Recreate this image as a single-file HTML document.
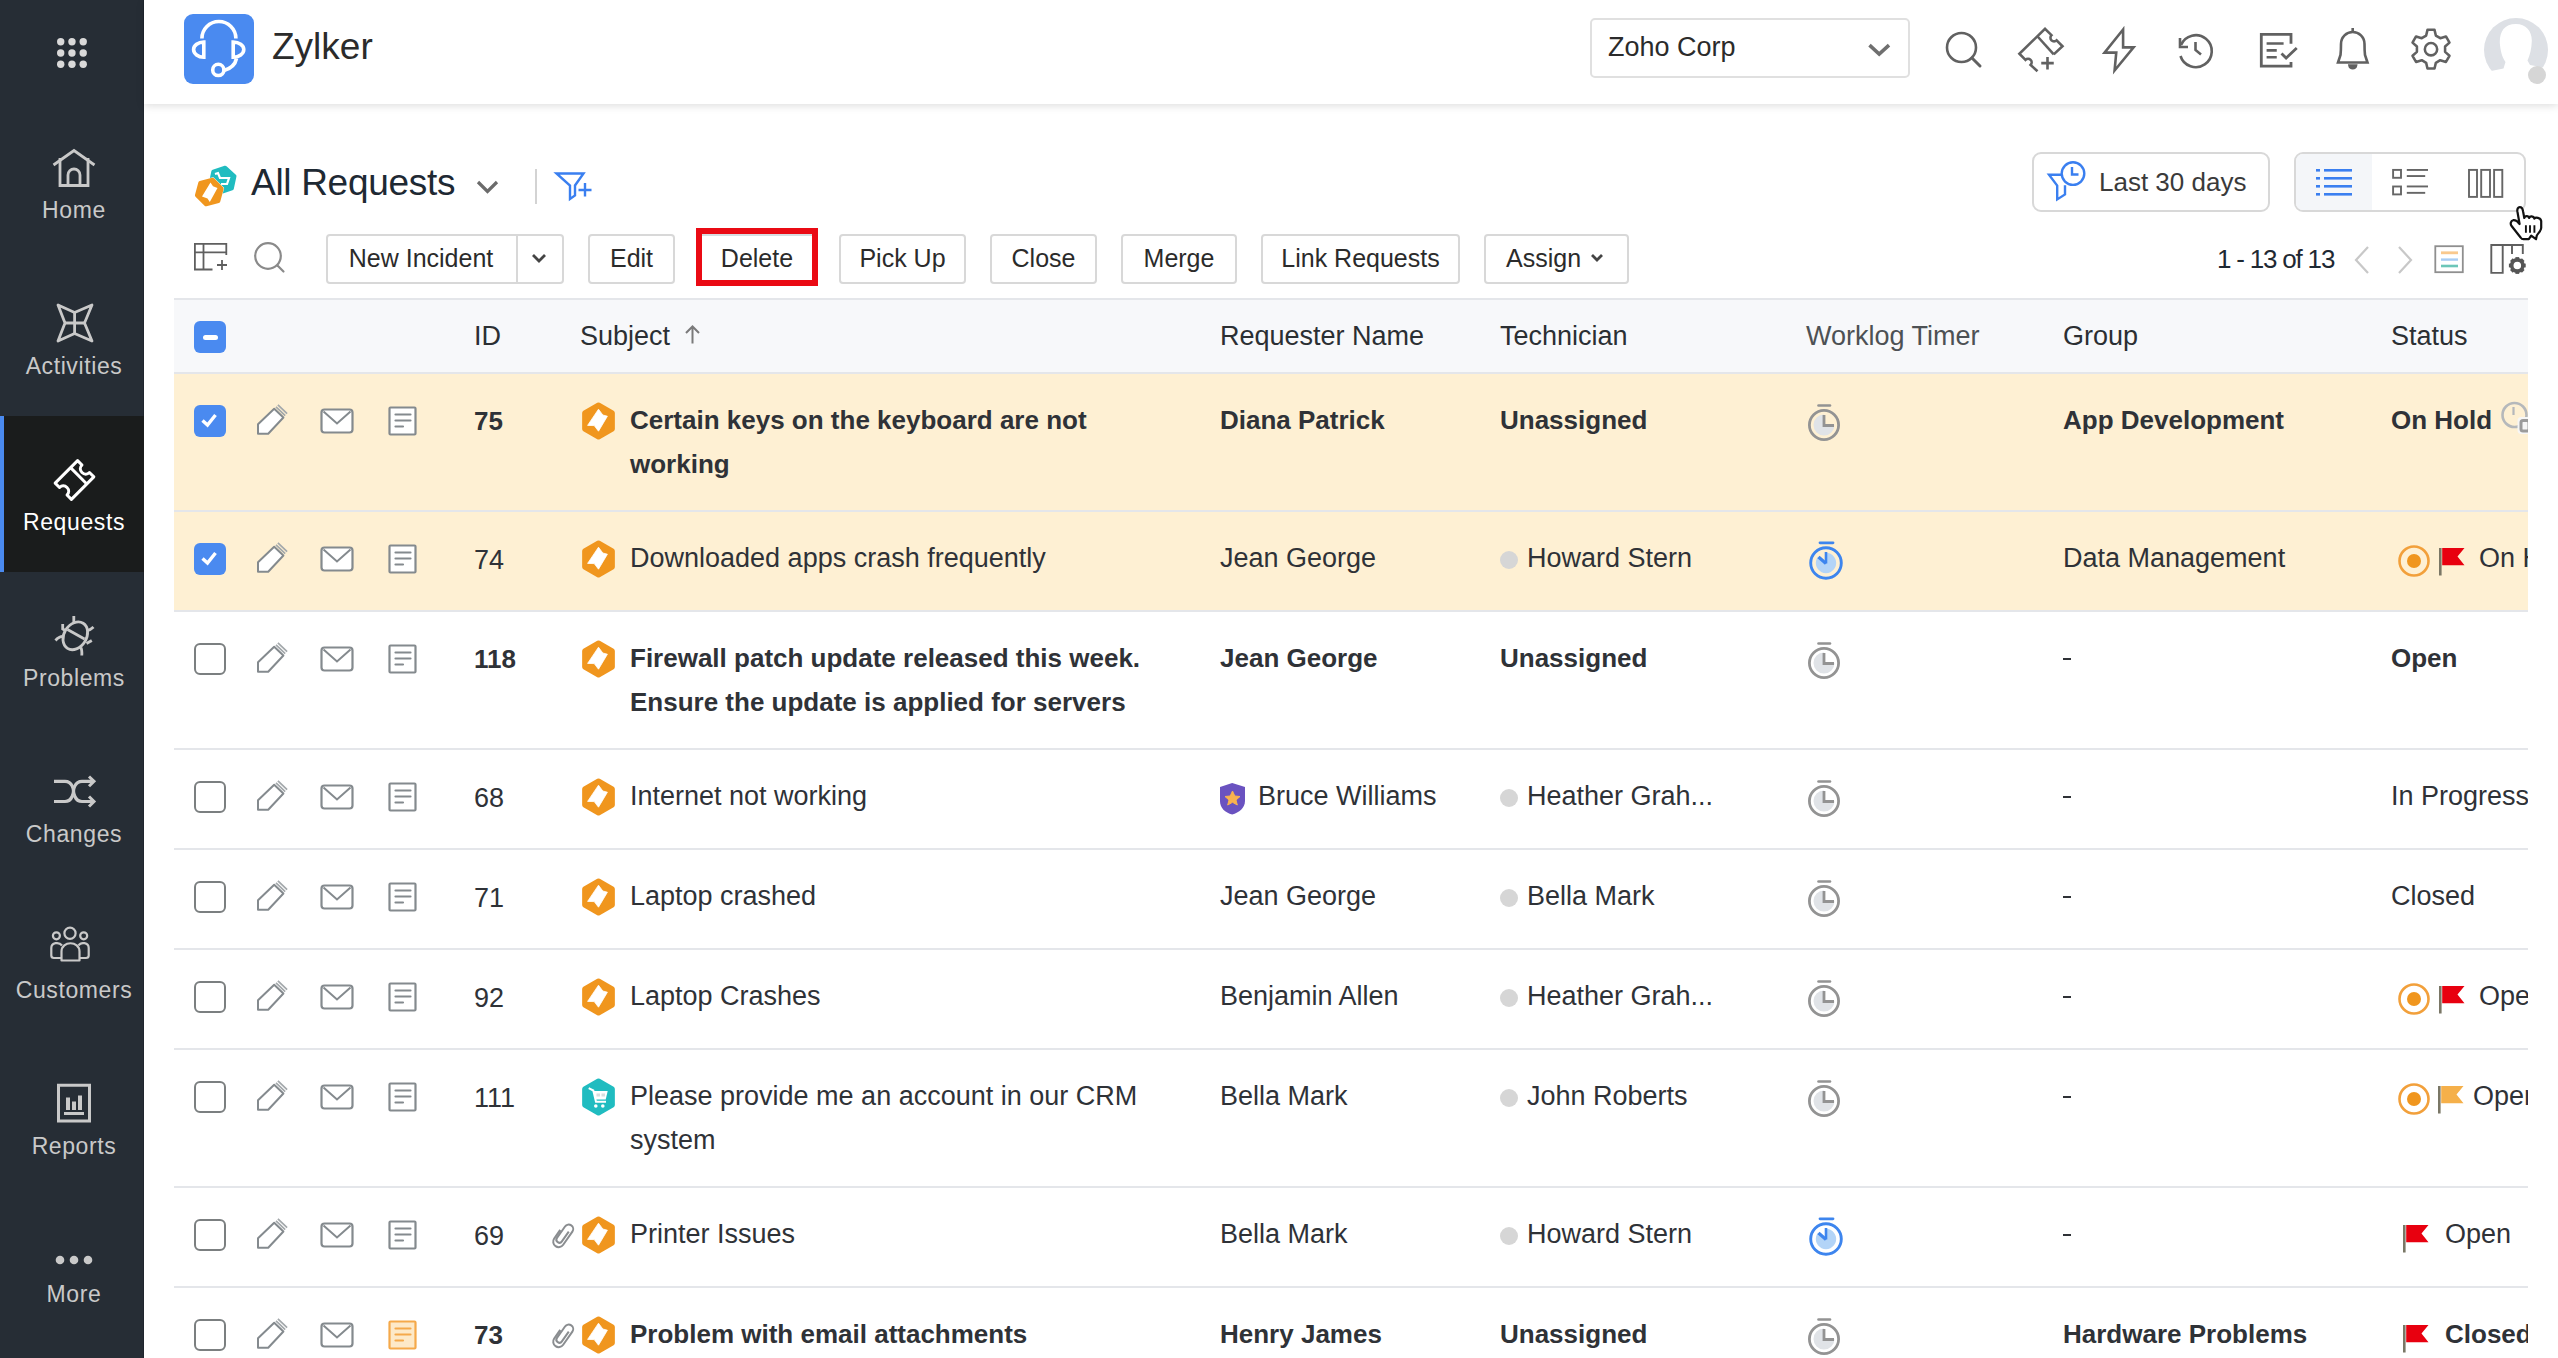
<!DOCTYPE html><html><head><meta charset="utf-8"><style>
html,body{margin:0;padding:0;width:2558px;height:1358px;overflow:hidden;background:#fff;}
body{position:relative;font-family:'Liberation Sans',sans-serif;}
.t{position:absolute;white-space:nowrap;line-height:1;font-family:'Liberation Sans',sans-serif;}
svg{overflow:visible}
</style></head><body>
<div style="position:absolute;left:0px;top:0px;width:144px;height:1358px;background:#262d35"></div>
<div style="position:absolute;left:143px;top:0px;width:1px;height:1358px;background:#1f252d"></div>
<svg style="position:absolute;left:0px;top:0px" width="144" height="104" viewBox="0 0 144 104"><circle cx="60.7" cy="41.7" r="3.7" fill="#d9d9d9"/><circle cx="60.7" cy="52.95" r="3.7" fill="#d9d9d9"/><circle cx="60.7" cy="64.2" r="3.7" fill="#d9d9d9"/><circle cx="71.95" cy="41.7" r="3.7" fill="#d9d9d9"/><circle cx="71.95" cy="52.95" r="3.7" fill="#d9d9d9"/><circle cx="71.95" cy="64.2" r="3.7" fill="#d9d9d9"/><circle cx="83.2" cy="41.7" r="3.7" fill="#d9d9d9"/><circle cx="83.2" cy="52.95" r="3.7" fill="#d9d9d9"/><circle cx="83.2" cy="64.2" r="3.7" fill="#d9d9d9"/></svg>
<div style="position:absolute;left:0px;top:416px;width:144px;height:156px;background:#1a1c1c"></div>
<div style="position:absolute;left:0px;top:416px;width:4px;height:156px;background:#4a8af0"></div>
<svg style="position:absolute;left:0px;top:0px" width="144" height="260" viewBox="0 0 144 260"><g fill="none" stroke="#c9c9c9" stroke-width="2.8" stroke-linejoin="miter"><path d="M53.5 165 L74 150.5 L94.5 165"/><path d="M60 158 V185.5 H88 V158"/><path d="M68 185.5 V175 A6 6 0 0 1 80 175 V185.5"/></g></svg>
<svg style="position:absolute;left:0px;top:260px" width="144" height="156" viewBox="0 0 144 156"><g fill="none" stroke="#c9c9c9" stroke-width="2.8" stroke-linejoin="round"><path d="M58 45 L74.6 52.5 L92 45 L84.5 63 L92 81 L74.6 73.5 L58 81 L65 63 Z" /><path d="M74.6 52.5 V73.5 M65 63 H84.5"/></g></svg>
<svg style="position:absolute;left:0px;top:416px" width="144" height="156" viewBox="0 0 144 156"><g fill="none" stroke="#ffffff" stroke-width="3.4" stroke-linejoin="round"><g transform="translate(74.5,64) scale(0.88) translate(-74.5,-66.5)"><path d="M78 44.5 L83 49.5 C80.5 52 80.5 55.5 83 58 C85.5 60.5 89 60.5 91.5 58 L96.5 63 L71 88.5 L66 83.5 C68.5 81 68.5 77.5 66 75 C63.5 72.5 60 72.5 57.5 75 L52.5 70 Z"/><path d="M70 52.5 L88.5 71"/></g></g></svg>
<svg style="position:absolute;left:0px;top:572px" width="144" height="156" viewBox="0 0 144 156"><g fill="none" stroke="#c9c9c9" stroke-width="2.8" stroke-linecap="butt"><ellipse cx="75.3" cy="63.8" rx="11.2" ry="14.8" transform="rotate(32 75.3 63.8)"/><path d="M67.5 57.5 L84.5 67"/><path d="M73.8 44 V51.5"/><path d="M62.7 52 V57 L66 59"/><path d="M55.5 68.5 C58 65.5 60.5 64 64 64.5"/><path d="M93.5 55 C91.5 57 89.5 58.5 86.5 58.8"/><path d="M91.8 68.5 L86.5 71.5"/><path d="M81.8 83.5 C82 80 82 77.5 80.8 75.5"/></g></svg>
<svg style="position:absolute;left:0px;top:728px" width="144" height="156" viewBox="0 0 144 156"><g fill="none" stroke="#c9c9c9" stroke-width="3.2"><path d="M54 53.3 H65 C73 53.3 73.5 63 73.5 63 C73.5 63 74 73.5 82 73.5 H93"/><path d="M54 73.5 H65 C73 73.5 73.5 63 73.5 63 C73.5 63 74 53.3 82 53.3 H93"/><path d="M89 48.5 L94 53.3 L89 58.3 M89 68.5 L94 73.5 L89 78.5" stroke-width="3"/></g></svg>
<svg style="position:absolute;left:0px;top:884px" width="144" height="156" viewBox="0 0 144 156"><g fill="none" stroke="#c9c9c9" stroke-width="2.2" stroke-linejoin="round"><circle cx="70" cy="49.3" r="5.6"/><circle cx="56.4" cy="51.8" r="3.5"/><circle cx="83.7" cy="51.8" r="3.5"/><path d="M61.5 76.5 V67.5 C61.5 56.5 79.5 56.5 79.5 67.5 V76.5 Z"/><path d="M61.5 74 H54 C52.5 74 51.3 73 51.3 71.5 V64 C51.3 58.5 59 57.5 62 61.5"/><path d="M79.5 74 H86 C87.5 74 88.7 73 88.7 71.5 V64 C88.7 58.5 81 57.5 78.5 61.5"/></g></svg>
<svg style="position:absolute;left:0px;top:1040px" width="144" height="156" viewBox="0 0 144 156"><g fill="#c9c9c9"><path fill="none" stroke="#c9c9c9" stroke-width="3" d="M58.5 45.3 H89.5 V81 H58.5 Z"/><rect x="66" y="57.5" width="4" height="12.5"/><rect x="72" y="61.5" width="4" height="8.5"/><rect x="78" y="55.5" width="4" height="14.5"/><rect x="64" y="72" width="20" height="3"/></g></svg>
<svg style="position:absolute;left:0px;top:1196px" width="144" height="162" viewBox="0 0 144 162"><circle cx="60" cy="64" r="4.3" fill="#c9c9c9"/><circle cx="74" cy="64" r="4.3" fill="#c9c9c9"/><circle cx="88" cy="64" r="4.3" fill="#c9c9c9"/></svg>
<div class="t" style="left:2px;width:144px;text-align:center;top:198.5px;font-size:23px;color:#c9c9c9;letter-spacing:0.6px">Home</div>
<div class="t" style="left:2px;width:144px;text-align:center;top:354.5px;font-size:23px;color:#c9c9c9;letter-spacing:0.6px">Activities</div>
<div class="t" style="left:2px;width:144px;text-align:center;top:510.5px;font-size:23px;color:#ffffff;letter-spacing:0.6px">Requests</div>
<div class="t" style="left:2px;width:144px;text-align:center;top:666.5px;font-size:23px;color:#c9c9c9;letter-spacing:0.6px">Problems</div>
<div class="t" style="left:2px;width:144px;text-align:center;top:822.5px;font-size:23px;color:#c9c9c9;letter-spacing:0.6px">Changes</div>
<div class="t" style="left:2px;width:144px;text-align:center;top:978.5px;font-size:23px;color:#c9c9c9;letter-spacing:0.6px">Customers</div>
<div class="t" style="left:2px;width:144px;text-align:center;top:1134.5px;font-size:23px;color:#c9c9c9;letter-spacing:0.6px">Reports</div>
<div class="t" style="left:2px;width:144px;text-align:center;top:1282.5px;font-size:23px;color:#c9c9c9;letter-spacing:0.6px">More</div>
<div style="position:absolute;left:144px;top:0px;width:2414px;height:104px;background:#fff;box-shadow:0 2px 8px rgba(0,0,0,0.13)"></div>
<div style="position:absolute;left:184px;top:14px;width:70px;height:70px;background:#4a8af0;border-radius:9px"></div>
<svg style="position:absolute;left:184px;top:14px" width="70" height="70" viewBox="0 0 70 70"><g fill="none" stroke="#fff" stroke-width="3.6"><path d="M17.9 24.5 A17 17 0 0 1 51.9 24.5"/><path d="M19.8 28 V43.2 A10.2 7.6 0 0 1 19.8 28 Z"/><path d="M49.2 28 V43.2 A10.6 7.6 0 0 0 49.2 28 Z"/><path d="M52.5 44.5 C51 51.5 47 54.5 40 56.5"/><circle cx="34.3" cy="55.9" r="5.6"/></g></svg>
<div class="t" style="left:272px;top:27.7px;font-size:37px;font-weight:400;color:#2b2b2b;">Zylker</div>
<div style="position:absolute;left:1590px;top:18px;width:320px;height:59.5px;border:2px solid #e0e0e0;border-radius:5px;box-sizing:border-box;background:#fff"></div>
<div class="t" style="left:1608px;top:34.1px;font-size:27px;font-weight:400;color:#2b2b2b;">Zoho Corp</div>
<svg style="position:absolute;left:1866px;top:38px" width="28" height="22" viewBox="0 0 28 22"><path d="M3.5 7.2 L13.2 16 L23 7.2" fill="none" stroke="#6f6f6f" stroke-width="3.6"/></svg>
<svg style="position:absolute;left:1940px;top:25px" width="50" height="50" viewBox="0 0 50 50"><g fill="none" stroke="#616161" stroke-width="2.6"><circle cx="21.5" cy="22.5" r="14.5"/><path d="M32 33 L40 41" stroke-width="3" stroke-linecap="round"/></g></svg>
<svg style="position:absolute;left:2015px;top:25px" width="50" height="50" viewBox="0 0 50 50"><g fill="none" stroke="#616161" stroke-width="2.6" stroke-linejoin="miter"><path d="M38.75 29.4 L47.5 21.25 L41.6 15.3 A3.6 3.6 0 0 1 36.5 10.2 L30 3.75 L4.4 28.75 L10.5 34.8 A3.6 3.6 0 0 1 15.6 39.9 L22.5 46.25"/><path d="M22.6 11.5 L38.75 29.4"/><path d="M32.5 32 V44.5 M26.25 38.1 H38.75"/></g></svg>
<svg style="position:absolute;left:2095px;top:25px" width="50" height="50" viewBox="0 0 50 50"><path d="M28.1 4.5 L9.5 27.6 H21.25 L19.6 45.5 L38.6 22.4 H28.1 Z" fill="none" stroke="#616161" stroke-width="2.6" stroke-linejoin="miter"/></svg>
<svg style="position:absolute;left:2172px;top:25.5px" width="50" height="50" viewBox="0 0 50 50"><g fill="none" stroke="#616161" stroke-width="2.6"><path d="M9 19 A16 16 0 1 1 8.5 30"/><path d="M8 12 V21 H16" /><path d="M23.5 16 V24 L29 28.5"/></g></svg>
<svg style="position:absolute;left:2250px;top:25px" width="50" height="50" viewBox="0 0 50 50"><g fill="none" stroke="#616161" stroke-width="2.8"><path d="M41 18.75 V9.4 H11.3 V41.1 H41 V36.9"/><path d="M16.6 18.5 H33.6 M16.6 25.4 H26.75 M16.6 32.25 H26.75" stroke-width="2.6"/><path d="M31.5 28.5 L36.1 33.1 L46.75 23.1"/></g></svg>
<svg style="position:absolute;left:2330px;top:25px" width="50" height="50" viewBox="0 0 50 50"><g fill="none" stroke="#616161" stroke-width="2.6"><path d="M8 37.5 H37.5 L35 30 C34.5 26 34.5 22 34.5 19 C34.5 12 29 7 22.7 7 C16.5 7 11 12 11 19 C11 22 11 26 10.5 30 Z"/><path d="M22.7 3 V7"/><path d="M19.5 40.5 A3.3 3.3 0 0 0 26 40.5 Z" fill="#616161"/></g></svg>
<svg style="position:absolute;left:2405px;top:24px" width="52" height="52" viewBox="0 0 52 52"><g transform="translate(26,25.2) scale(0.88) translate(-26,-27)" fill="none" stroke="#616161" stroke-width="2.9" stroke-linejoin="round"><path d="M22 5 H30 L31.5 11.5 L36.5 14.5 L43 12.5 L47 19.5 L42 24 V30 L47 34.5 L43 41.5 L36.5 39.5 L31.5 42.5 L30 49 H22 L20.5 42.5 L15.5 39.5 L9 41.5 L5 34.5 L10 30 V24 L5 19.5 L9 12.5 L15.5 14.5 L20.5 11.5 Z"/><circle cx="26" cy="27" r="7"/></g></svg>
<svg style="position:absolute;left:2480px;top:10px" width="78" height="80" viewBox="0 0 78 80"><circle cx="36" cy="40" r="32" fill="#dde0e5"/><path d="M6 62 L23.5 58.5 L25.5 52 C22 47 20.5 41 19.8 33 C19.5 22 24 13.9 36 13.9 C46 13.9 52 21 51.8 31 C51.5 39 50 45 47.5 50.5 L50 55 L66 58 L66 80 L6 80 Z" fill="#fff"/><circle cx="57" cy="65" r="9" fill="#d6d6d6"/></svg>
<svg style="position:absolute;left:190px;top:160px" width="50" height="50" viewBox="0 0 50 50"><path d="M35.20 7.77 L44.49 16.14 L41.89 28.36 L30.00 32.23 L20.71 23.86 L23.31 11.64 Z" fill="#20bcc0" stroke="#20bcc0" stroke-width="4" stroke-linejoin="round"/><path d="M25 14 L28 13 L30 18 H39 L37 24 H31" fill="none" stroke="#fff" stroke-width="2.2"/><path d="M23.00 18.19 L33.11 28.30 L29.41 42.11 L15.60 45.81 L5.49 35.70 L9.19 21.89 Z" fill="#fff" stroke="#fff" stroke-width="2" stroke-linejoin="round"/><path d="M22.61 19.64 L31.66 28.69 L28.35 41.05 L15.99 44.36 L6.94 35.31 L10.25 22.95 Z" fill="#f0961e" stroke="#f0961e" stroke-width="4" stroke-linejoin="round"/><path d="M20.5 22.5 L23 26.2 L27.5 28 L19.8 42 L17.5 38.5 L12 36.5 Z" fill="#fff"/></svg>
<div class="t" style="left:251px;top:164.3px;font-size:37px;font-weight:400;color:#1e2933;letter-spacing:-0.3px">All Requests</div>
<svg style="position:absolute;left:470px;top:176px" width="36" height="24" viewBox="0 0 36 24"><path d="M8 6 L17.5 15.5 L27 6" fill="none" stroke="#6b6b6b" stroke-width="3.2"/></svg>
<div style="position:absolute;left:535px;top:169px;width:2px;height:35px;background:#d3d3d3"></div>
<svg style="position:absolute;left:550px;top:168px" width="48" height="40" viewBox="0 0 48 40"><g fill="none" stroke="#3a7ff0" stroke-width="2.4"><path d="M6.5 5.5 H33.5 L25 17.5 V27.5 L20 31 V17.5 Z"/><path d="M35 15 V28.5 M28.5 22 H41.5"/></g></svg>
<div style="position:absolute;left:2032px;top:152px;width:238px;height:60px;border:2px solid #d8d8d8;border-radius:9px;box-sizing:border-box"></div>
<svg style="position:absolute;left:2044px;top:156px" width="48" height="48" viewBox="0 0 48 48"><g fill="none" stroke="#3a7ff0" stroke-width="2.4" stroke-linejoin="miter"><circle cx="29" cy="17.6" r="11.3"/><path d="M28 11 V18.5 H34.5"/><path d="M17.8 18.7 H5 L13.2 29.6 V43.4 L21 38.4 V29.2"/></g></svg>
<div class="t" style="left:2099px;top:169.0px;font-size:26px;font-weight:400;color:#3a3a3a;">Last 30 days</div>
<div style="position:absolute;left:2294px;top:152px;width:232px;height:60px;border:2px solid #d8d8d8;border-radius:9px;box-sizing:border-box;overflow:hidden"></div>
<div style="position:absolute;left:2296px;top:154px;width:76px;height:56px;background:#f4f6f9;border-radius:7px 0 0 7px"></div>
<svg style="position:absolute;left:2300px;top:160px" width="60" height="45" viewBox="0 0 60 45"><g fill="#3a7ff0"><rect x="16" y="9" width="4" height="2.6"/><rect x="16" y="17" width="4" height="2.6"/><rect x="16" y="25" width="4" height="2.6"/><rect x="16" y="33" width="4" height="2.6"/><rect x="24" y="9" width="28" height="2.6"/><rect x="24" y="17" width="28" height="2.6"/><rect x="24" y="25" width="28" height="2.6"/><rect x="24" y="33" width="28" height="2.6"/></g></svg>
<svg style="position:absolute;left:2380px;top:160px" width="60" height="45" viewBox="0 0 60 45"><g fill="none" stroke="#666" stroke-width="1.9"><rect x="13.1" y="9.9" width="7.9" height="7.9"/><rect x="13.1" y="26.5" width="7.9" height="7.9"/></g><g fill="#666"><rect x="26.8" y="9" width="21.2" height="1.9"/><rect x="26.8" y="15.1" width="18.4" height="1.9"/><rect x="26.8" y="25.5" width="21.2" height="1.9"/><rect x="26.8" y="31.9" width="18.4" height="1.9"/></g></svg>
<svg style="position:absolute;left:2460px;top:160px" width="60" height="45" viewBox="0 0 60 45"><g fill="none" stroke="#666" stroke-width="1.9"><rect x="9" y="9.9" width="8" height="27"/><rect x="21.2" y="9.9" width="8.8" height="27"/><rect x="34.1" y="9.9" width="8.2" height="27"/></g></svg>
<svg style="position:absolute;left:2500px;top:195px" width="50" height="50" viewBox="0 0 50 50"><path d="M19.6 29 L17.4 16.5 C17 13.8 18 12.2 19.8 12.2 C21.7 12.2 22.7 13.8 23.1 16.5 L24.3 23 C24.8 20.5 28.5 20.3 29.2 23 C29.7 20.8 33.6 20.8 34.3 23.6 C35.3 22 40.6 22.5 41.2 26 L41.2 33 C41 36 38.3 38 36.8 40.5 L36 44.2 L31.2 40.7 L28.8 44.2 H23.5 C22.2 44.2 21.3 43.6 20.6 42.5 L11.6 31 C10 29 10.7 25.8 13.2 25.2 C15.4 24.8 17.5 26.3 19.6 29 Z" fill="#fff" stroke="#111" stroke-width="2.2" stroke-linejoin="round"/><path d="M25.9 30.3 V37.8 M30 30.3 V37.8 M34.4 30.3 V37.8" stroke="#111" stroke-width="1.9"/></svg>
<svg style="position:absolute;left:190px;top:238px" width="42" height="38" viewBox="0 0 42 38"><g fill="none" stroke="#5f5f5f" stroke-width="1.8"><path d="M22.5 31.5 H4.9 V5.9 H36.3 V17"/><path d="M4.9 14.3 H36.3 M13.5 5.9 V31.5"/><path d="M32 22 V32 M27 27 H37"/></g></svg>
<svg style="position:absolute;left:250px;top:238px" width="42" height="42" viewBox="0 0 42 42"><g fill="none" stroke="#8a8a8a" stroke-width="2.2"><circle cx="18" cy="18" r="12.8"/><path d="M27.5 27.5 L33.5 33.5" stroke-linecap="round"/></g></svg>
<div style="position:absolute;left:326px;top:234px;width:238px;height:50px;border:2px solid #d8d8d8;border-radius:4px;box-sizing:border-box;background:#fff"></div>
<div style="position:absolute;left:516px;top:234px;width:2px;height:50px;background:#d8d8d8"></div>
<div class="t" style="left:326px;width:190px;text-align:center;top:245.8px;font-size:25px;color:#2b2b2b">New Incident</div>
<svg style="position:absolute;left:528px;top:248px" width="24" height="20" viewBox="0 0 24 20"><path d="M5 7 L11 13 L17 7" fill="none" stroke="#444" stroke-width="2.8"/></svg>
<div style="position:absolute;left:588px;top:234px;width:87px;height:50px;border:2px solid #d8d8d8;border-radius:4px;box-sizing:border-box;background:#fff"></div>
<div class="t" style="left:588px;width:87px;text-align:center;top:245.8px;font-size:25px;color:#2b2b2b">Edit</div>
<div style="position:absolute;left:702px;top:234px;width:110px;height:46px;background:#fff;border-top:2px solid #d6dde0;box-sizing:border-box"></div>
<div class="t" style="left:702px;width:110px;text-align:center;top:245.8px;font-size:25px;color:#2b2b2b">Delete</div>
<div style="position:absolute;left:696px;top:228px;width:122px;height:58px;border:6px solid #ea0a14;box-sizing:border-box"></div>
<div style="position:absolute;left:839px;top:234px;width:127px;height:50px;border:2px solid #d8d8d8;border-radius:4px;box-sizing:border-box;background:#fff"></div>
<div class="t" style="left:839px;width:127px;text-align:center;top:245.8px;font-size:25px;color:#2b2b2b">Pick Up</div>
<div style="position:absolute;left:990px;top:234px;width:107px;height:50px;border:2px solid #d8d8d8;border-radius:4px;box-sizing:border-box;background:#fff"></div>
<div class="t" style="left:990px;width:107px;text-align:center;top:245.8px;font-size:25px;color:#2b2b2b">Close</div>
<div style="position:absolute;left:1121px;top:234px;width:116px;height:50px;border:2px solid #d8d8d8;border-radius:4px;box-sizing:border-box;background:#fff"></div>
<div class="t" style="left:1121px;width:116px;text-align:center;top:245.8px;font-size:25px;color:#2b2b2b">Merge</div>
<div style="position:absolute;left:1261px;top:234px;width:199px;height:50px;border:2px solid #d8d8d8;border-radius:4px;box-sizing:border-box;background:#fff"></div>
<div class="t" style="left:1261px;width:199px;text-align:center;top:245.8px;font-size:25px;color:#2b2b2b">Link Requests</div>
<div style="position:absolute;left:1484px;top:234px;width:145px;height:50px;border:2px solid #d8d8d8;border-radius:4px;box-sizing:border-box;background:#fff"></div>
<div class="t" style="left:1506px;top:245.8px;font-size:25px;font-weight:400;color:#2b2b2b;">Assign</div>
<svg style="position:absolute;left:1586px;top:248px" width="24" height="20" viewBox="0 0 24 20"><path d="M6 7 L11 12 L16 7" fill="none" stroke="#444" stroke-width="2.8"/></svg>
<div class="t" style="left:2217px;top:246.0px;font-size:26px;font-weight:400;color:#1f2933;letter-spacing:-1.2px">1 - 13 of 13</div>
<svg style="position:absolute;left:2350px;top:244px" width="26" height="32" viewBox="0 0 26 32"><path d="M18 3 L6 16 L18 29" fill="none" stroke="#c8c8c8" stroke-width="2.2"/></svg>
<svg style="position:absolute;left:2393px;top:244px" width="26" height="32" viewBox="0 0 26 32"><path d="M6 3 L18 16 L6 29" fill="none" stroke="#c8c8c8" stroke-width="2.2"/></svg>
<svg style="position:absolute;left:2430px;top:242px" width="38" height="36" viewBox="0 0 38 36"><rect x="5.3" y="4.2" width="27.5" height="26" fill="#fff" stroke="#8f8f8f" stroke-width="1.8"/><rect x="11" y="9.4" width="17" height="2.8" fill="#f9c98e"/><rect x="11" y="16.4" width="17" height="2.4" fill="#a8cdf5"/><rect x="11" y="22.7" width="17" height="2.6" fill="#6cc6b8"/></svg>
<svg style="position:absolute;left:2486px;top:240px" width="46" height="40" viewBox="0 0 46 40"><g fill="none" stroke="#5f5f5f" stroke-width="1.9"><path d="M5.3 32.9 V5 H16.7 V32.9 Z"/><path d="M16.7 5 H36.8 V14 M26 5 V14"/></g><g transform="translate(31.3,25.5)"><rect x="-1.9" y="-8.4" width="3.8" height="4" transform="rotate(0)" fill="#555"/><rect x="-1.9" y="-8.4" width="3.8" height="4" transform="rotate(45)" fill="#555"/><rect x="-1.9" y="-8.4" width="3.8" height="4" transform="rotate(90)" fill="#555"/><rect x="-1.9" y="-8.4" width="3.8" height="4" transform="rotate(135)" fill="#555"/><rect x="-1.9" y="-8.4" width="3.8" height="4" transform="rotate(180)" fill="#555"/><rect x="-1.9" y="-8.4" width="3.8" height="4" transform="rotate(225)" fill="#555"/><rect x="-1.9" y="-8.4" width="3.8" height="4" transform="rotate(270)" fill="#555"/><rect x="-1.9" y="-8.4" width="3.8" height="4" transform="rotate(315)" fill="#555"/><circle r="5.6" fill="none" stroke="#555" stroke-width="3.6"/></g></svg>
<div style="position:absolute;left:174px;top:298px;width:2354px;height:1060px;overflow:hidden">
<div style="position:absolute;left:0px;top:0px;width:2354px;height:2px;background:#e4e6ea"></div>
<div style="position:absolute;left:0px;top:2px;width:2354px;height:72px;background:#f7f8fa"></div>
<div style="position:absolute;left:0px;top:74px;width:2354px;height:2px;background:#e4e6ea"></div>
<div style="position:absolute;left:20px;top:23px;width:32px;height:32px;background:#4a8af0;border-radius:6px"></div>
<div style="position:absolute;left:29px;top:37px;width:15px;height:5px;background:#fff;border-radius:2.5px"></div>
<div class="t" style="left:300px;top:25.1px;font-size:27px;font-weight:400;color:#2b2f33;">ID</div>
<div class="t" style="left:406px;top:25.1px;font-size:27px;font-weight:400;color:#2b2f33;">Subject</div>
<div class="t" style="left:1046px;top:25.1px;font-size:27px;font-weight:400;color:#2b2f33;">Requester Name</div>
<div class="t" style="left:1326px;top:25.1px;font-size:27px;font-weight:400;color:#2b2f33;">Technician</div>
<div class="t" style="left:1632px;top:25.1px;font-size:27px;font-weight:400;color:#4d5154;">Worklog Timer</div>
<div class="t" style="left:1889px;top:25.1px;font-size:27px;font-weight:400;color:#2b2f33;">Group</div>
<div class="t" style="left:2217px;top:25.1px;font-size:27px;font-weight:400;color:#2b2f33;">Status</div>
<svg style="position:absolute;left:506px;top:24px" width="26" height="26" viewBox="0 0 26 26"><path d="M12.5 4.5 V21.5 M6 11 L12.5 4.5 L19 11" fill="none" stroke="#7a7a7a" stroke-width="2"/></svg>
<div style="position:absolute;left:0px;top:76px;width:2354px;height:136px;background:#fef0d3"></div>
<div style="position:absolute;left:0px;top:212px;width:2354px;height:2px;background:#e4e6ea"></div>
<div style="position:absolute;left:20px;top:107px;width:32px;height:32px;background:#4a8af0;border-radius:6px"></div>
<svg style="position:absolute;left:20px;top:107px" width="32" height="32" viewBox="0 0 32 32"><path d="M8.5 15.5 L13.5 20 L21.5 10" fill="none" stroke="#fff" stroke-width="3.4"/></svg>
<svg style="position:absolute;left:81px;top:107px" width="34" height="34" viewBox="0 0 34 34"><path d="M3 19.2 L19.2 3.7 L28.4 12.5 L13.2 28.7 H3 Z" fill="#fff" stroke="#848a8e" stroke-width="2" stroke-linejoin="round"/><path d="M21 1.8 L30.2 10.6 M22.9 -0.1 L32.1 8.7" stroke="#a3a8ab" stroke-width="1.7"/></svg>
<svg style="position:absolute;left:146px;top:110px" width="36" height="30" viewBox="0 0 36 30"><rect x="1.5" y="1.5" width="31" height="23" rx="3" fill="#fff" stroke="#848a8e" stroke-width="2.2"/><path d="M3.5 3.5 L17 15.5 L30.5 3.5" fill="none" stroke="#848a8e" stroke-width="2"/></svg>
<svg style="position:absolute;left:214px;top:108px" width="32" height="32" viewBox="0 0 32 32"><rect x="1.5" y="1.5" width="26" height="27" rx="1" fill="#fff" stroke="#848a8e" stroke-width="2.2"/><path d="M7.5 8.5 H22.5 M7.5 14.5 H22.5 M7.5 20.5 H15" stroke="#848a8e" stroke-width="2.2" stroke-linecap="round"/></svg>
<div class="t" style="left:300px;top:110.0px;font-size:26px;font-weight:700;color:#2f3237;">75</div>
<svg style="position:absolute;left:408.4px;top:104.80000000000001px" width="33" height="36" viewBox="0 0 33 36"><path d="M16.50 2.00 L30.36 10.00 L30.36 26.00 L16.50 34.00 L2.64 26.00 L2.64 10.00 Z" fill="#f0961e" stroke="#f0961e" stroke-width="5" stroke-linejoin="round"/><path d="M16.5 6.2 L20.8 12 L25.4 13.2 L16.5 28.2 L12.2 22.6 L5.6 22.4 Z" fill="#fff" stroke="#fff" stroke-width="0.8" stroke-linejoin="round"/></svg>
<div class="t" style="left:456px;top:108.5px;font-size:26px;font-weight:700;color:#2f3237;">Certain keys on the keyboard are not</div>
<div class="t" style="left:456px;top:152.5px;font-size:26px;font-weight:700;color:#2f3237;">working</div>
<div class="t" style="left:1046px;top:108.5px;font-size:26px;font-weight:700;color:#2f3237;">Diana Patrick</div>
<div class="t" style="left:1326px;top:108.5px;font-size:26px;font-weight:700;color:#2f3237;">Unassigned</div>
<svg style="position:absolute;left:1630px;top:104.5px" width="40" height="40" viewBox="0 0 40 40"><path d="M20 22 V11.5 A10.5 10.5 0 1 0 30.5 22 Z" fill="#e0e3e7"/><circle cx="20" cy="22" r="14.6" fill="none" stroke="#939393" stroke-width="2.8"/><path d="M20 12 V22.5 H30" fill="none" stroke="#939393" stroke-width="2.8"/><path d="M14.5 2.5 H26" stroke="#939393" stroke-width="2.6" stroke-linecap="round"/></svg>
<div class="t" style="left:1889px;top:108.5px;font-size:26px;font-weight:700;color:#2f3237;">App Development</div>
<div class="t" style="left:2217px;top:108.5px;font-size:26px;font-weight:700;color:#2f3237;">On Hold</div>
<svg style="position:absolute;left:2326px;top:102px" width="40" height="40" viewBox="0 0 40 40"><circle cx="14.5" cy="15" r="12" fill="none" stroke="#b5b8bb" stroke-width="2.6"/><path d="M13.5 7 V15" stroke="#b5b8bb" stroke-width="2.2"/><rect x="17.5" y="17" width="15" height="17" rx="4" fill="#f6f6f6"/><rect x="21" y="20.5" width="8" height="10.5" rx="2" fill="none" stroke="#9b9b9b" stroke-width="3"/></svg>
<div style="position:absolute;left:0px;top:214px;width:2354px;height:98px;background:#fef0d3"></div>
<div style="position:absolute;left:0px;top:312px;width:2354px;height:2px;background:#e4e6ea"></div>
<div style="position:absolute;left:20px;top:245px;width:32px;height:32px;background:#4a8af0;border-radius:6px"></div>
<svg style="position:absolute;left:20px;top:245px" width="32" height="32" viewBox="0 0 32 32"><path d="M8.5 15.5 L13.5 20 L21.5 10" fill="none" stroke="#fff" stroke-width="3.4"/></svg>
<svg style="position:absolute;left:81px;top:245px" width="34" height="34" viewBox="0 0 34 34"><path d="M3 19.2 L19.2 3.7 L28.4 12.5 L13.2 28.7 H3 Z" fill="#fff" stroke="#848a8e" stroke-width="2" stroke-linejoin="round"/><path d="M21 1.8 L30.2 10.6 M22.9 -0.1 L32.1 8.7" stroke="#a3a8ab" stroke-width="1.7"/></svg>
<svg style="position:absolute;left:146px;top:248px" width="36" height="30" viewBox="0 0 36 30"><rect x="1.5" y="1.5" width="31" height="23" rx="3" fill="#fff" stroke="#848a8e" stroke-width="2.2"/><path d="M3.5 3.5 L17 15.5 L30.5 3.5" fill="none" stroke="#848a8e" stroke-width="2"/></svg>
<svg style="position:absolute;left:214px;top:246px" width="32" height="32" viewBox="0 0 32 32"><rect x="1.5" y="1.5" width="26" height="27" rx="1" fill="#fff" stroke="#848a8e" stroke-width="2.2"/><path d="M7.5 8.5 H22.5 M7.5 14.5 H22.5 M7.5 20.5 H15" stroke="#848a8e" stroke-width="2.2" stroke-linecap="round"/></svg>
<div class="t" style="left:300px;top:248.6px;font-size:27px;font-weight:400;color:#2f3237;">74</div>
<svg style="position:absolute;left:408.4px;top:242.79999999999995px" width="33" height="36" viewBox="0 0 33 36"><path d="M16.50 2.00 L30.36 10.00 L30.36 26.00 L16.50 34.00 L2.64 26.00 L2.64 10.00 Z" fill="#f0961e" stroke="#f0961e" stroke-width="5" stroke-linejoin="round"/><path d="M16.5 6.2 L20.8 12 L25.4 13.2 L16.5 28.2 L12.2 22.6 L5.6 22.4 Z" fill="#fff" stroke="#fff" stroke-width="0.8" stroke-linejoin="round"/></svg>
<div class="t" style="left:456px;top:247.1px;font-size:27px;font-weight:400;color:#2f3237;">Downloaded apps crash frequently</div>
<div class="t" style="left:1046px;top:247.1px;font-size:27px;font-weight:400;color:#2f3237;">Jean George</div>
<div style="position:absolute;left:1326px;top:253px;width:18px;height:18px;background:#d6d6d6;border-radius:50%"></div>
<div class="t" style="left:1353px;top:247.1px;font-size:27px;font-weight:400;color:#2f3237;">Howard Stern</div>
<svg style="position:absolute;left:1632px;top:242.5px" width="40" height="40" viewBox="0 0 40 40"><path d="M20 22 V11.8 A10.2 10.2 0 1 1 12.04 15.62 Z" fill="#b3d4f7"/><circle cx="20" cy="22" r="15.3" fill="none" stroke="#3d85ee" stroke-width="2.9"/><path d="M20 22.5 V11" stroke="#3d85ee" stroke-width="2.6"/><path d="M20 22.5 L12.5 16" stroke="#3d85ee" stroke-width="3.2"/><path d="M14 1.8 H27" stroke="#3d85ee" stroke-width="2.8" stroke-linecap="round"/></svg>
<div class="t" style="left:1889px;top:247.1px;font-size:27px;font-weight:400;color:#2f3237;">Data Management</div>
<svg style="position:absolute;left:2222.7px;top:245.79999999999995px" width="34" height="34" viewBox="0 0 34 34"><circle cx="17" cy="17" r="14.5" fill="none" stroke="#f2a03b" stroke-width="2.6"/><circle cx="17" cy="17" r="7" fill="#f0961e"/></svg>
<svg style="position:absolute;left:2265px;top:250px" width="30" height="30" viewBox="0 0 30 30"><rect x="0" y="0" width="2.6" height="27.5" fill="#7a7766"/><path d="M3.2 0 H25.5 L18.5 8.6 L25.5 17.3 H3.2 Z" fill="#e8000f"/></svg>
<div class="t" style="left:2305px;top:247.1px;font-size:27px;font-weight:400;color:#2f3237;">On Hold</div>
<div style="position:absolute;left:0px;top:314px;width:2354px;height:136px;background:#fff"></div>
<div style="position:absolute;left:0px;top:450px;width:2354px;height:2px;background:#e4e6ea"></div>
<div style="position:absolute;left:20px;top:345px;width:32px;height:32px;border:2px solid #7b7f80;border-radius:6px;box-sizing:border-box;background:#fff"></div>
<svg style="position:absolute;left:81px;top:345px" width="34" height="34" viewBox="0 0 34 34"><path d="M3 19.2 L19.2 3.7 L28.4 12.5 L13.2 28.7 H3 Z" fill="#fff" stroke="#848a8e" stroke-width="2" stroke-linejoin="round"/><path d="M21 1.8 L30.2 10.6 M22.9 -0.1 L32.1 8.7" stroke="#a3a8ab" stroke-width="1.7"/></svg>
<svg style="position:absolute;left:146px;top:348px" width="36" height="30" viewBox="0 0 36 30"><rect x="1.5" y="1.5" width="31" height="23" rx="3" fill="#fff" stroke="#848a8e" stroke-width="2.2"/><path d="M3.5 3.5 L17 15.5 L30.5 3.5" fill="none" stroke="#848a8e" stroke-width="2"/></svg>
<svg style="position:absolute;left:214px;top:346px" width="32" height="32" viewBox="0 0 32 32"><rect x="1.5" y="1.5" width="26" height="27" rx="1" fill="#fff" stroke="#848a8e" stroke-width="2.2"/><path d="M7.5 8.5 H22.5 M7.5 14.5 H22.5 M7.5 20.5 H15" stroke="#848a8e" stroke-width="2.2" stroke-linecap="round"/></svg>
<div class="t" style="left:300px;top:348.0px;font-size:26px;font-weight:700;color:#2f3237;">118</div>
<svg style="position:absolute;left:408.4px;top:342.79999999999995px" width="33" height="36" viewBox="0 0 33 36"><path d="M16.50 2.00 L30.36 10.00 L30.36 26.00 L16.50 34.00 L2.64 26.00 L2.64 10.00 Z" fill="#f0961e" stroke="#f0961e" stroke-width="5" stroke-linejoin="round"/><path d="M16.5 6.2 L20.8 12 L25.4 13.2 L16.5 28.2 L12.2 22.6 L5.6 22.4 Z" fill="#fff" stroke="#fff" stroke-width="0.8" stroke-linejoin="round"/></svg>
<div class="t" style="left:456px;top:346.5px;font-size:26px;font-weight:700;color:#2f3237;">Firewall patch update released this week.</div>
<div class="t" style="left:456px;top:390.5px;font-size:26px;font-weight:700;color:#2f3237;">Ensure the update is applied for servers</div>
<div class="t" style="left:1046px;top:346.5px;font-size:26px;font-weight:700;color:#2f3237;">Jean George</div>
<div class="t" style="left:1326px;top:346.5px;font-size:26px;font-weight:700;color:#2f3237;">Unassigned</div>
<svg style="position:absolute;left:1630px;top:342.5px" width="40" height="40" viewBox="0 0 40 40"><path d="M20 22 V11.5 A10.5 10.5 0 1 0 30.5 22 Z" fill="#e0e3e7"/><circle cx="20" cy="22" r="14.6" fill="none" stroke="#939393" stroke-width="2.8"/><path d="M20 12 V22.5 H30" fill="none" stroke="#939393" stroke-width="2.8"/><path d="M14.5 2.5 H26" stroke="#939393" stroke-width="2.6" stroke-linecap="round"/></svg>
<div style="position:absolute;left:1889px;top:360px;width:8px;height:2.4px;background:#2f3237"></div>
<div class="t" style="left:2217px;top:346.5px;font-size:26px;font-weight:700;color:#2f3237;">Open</div>
<div style="position:absolute;left:0px;top:452px;width:2354px;height:98px;background:#fff"></div>
<div style="position:absolute;left:0px;top:550px;width:2354px;height:2px;background:#e4e6ea"></div>
<div style="position:absolute;left:20px;top:483px;width:32px;height:32px;border:2px solid #7b7f80;border-radius:6px;box-sizing:border-box;background:#fff"></div>
<svg style="position:absolute;left:81px;top:483px" width="34" height="34" viewBox="0 0 34 34"><path d="M3 19.2 L19.2 3.7 L28.4 12.5 L13.2 28.7 H3 Z" fill="#fff" stroke="#848a8e" stroke-width="2" stroke-linejoin="round"/><path d="M21 1.8 L30.2 10.6 M22.9 -0.1 L32.1 8.7" stroke="#a3a8ab" stroke-width="1.7"/></svg>
<svg style="position:absolute;left:146px;top:486px" width="36" height="30" viewBox="0 0 36 30"><rect x="1.5" y="1.5" width="31" height="23" rx="3" fill="#fff" stroke="#848a8e" stroke-width="2.2"/><path d="M3.5 3.5 L17 15.5 L30.5 3.5" fill="none" stroke="#848a8e" stroke-width="2"/></svg>
<svg style="position:absolute;left:214px;top:484px" width="32" height="32" viewBox="0 0 32 32"><rect x="1.5" y="1.5" width="26" height="27" rx="1" fill="#fff" stroke="#848a8e" stroke-width="2.2"/><path d="M7.5 8.5 H22.5 M7.5 14.5 H22.5 M7.5 20.5 H15" stroke="#848a8e" stroke-width="2.2" stroke-linecap="round"/></svg>
<div class="t" style="left:300px;top:486.6px;font-size:27px;font-weight:400;color:#2f3237;">68</div>
<svg style="position:absolute;left:408.4px;top:480.79999999999995px" width="33" height="36" viewBox="0 0 33 36"><path d="M16.50 2.00 L30.36 10.00 L30.36 26.00 L16.50 34.00 L2.64 26.00 L2.64 10.00 Z" fill="#f0961e" stroke="#f0961e" stroke-width="5" stroke-linejoin="round"/><path d="M16.5 6.2 L20.8 12 L25.4 13.2 L16.5 28.2 L12.2 22.6 L5.6 22.4 Z" fill="#fff" stroke="#fff" stroke-width="0.8" stroke-linejoin="round"/></svg>
<div class="t" style="left:456px;top:485.1px;font-size:27px;font-weight:400;color:#2f3237;">Internet not working</div>
<svg style="position:absolute;left:1045px;top:484px" width="28" height="34" viewBox="0 0 28 34"><path d="M1 5 L13.2 1 L26 5 V19 C26 26 20 30.5 13.2 32.5 C6 30.5 1 26 1 19 Z" fill="#6a52c0"/><path d="M13.5 9 L15.8 14 L21 14.5 L17 18 L18.3 23 L13.5 20.3 L8.7 23 L10 18 L6 14.5 L11.2 14 Z" fill="#f9b24e" stroke="#f9b24e" stroke-width="1" stroke-linejoin="round"/></svg>
<div class="t" style="left:1084px;top:485.1px;font-size:27px;font-weight:400;color:#2f3237;">Bruce Williams</div>
<div style="position:absolute;left:1326px;top:491px;width:18px;height:18px;background:#d6d6d6;border-radius:50%"></div>
<div class="t" style="left:1353px;top:485.1px;font-size:27px;font-weight:400;color:#2f3237;">Heather Grah...</div>
<svg style="position:absolute;left:1630px;top:480.5px" width="40" height="40" viewBox="0 0 40 40"><path d="M20 22 V11.5 A10.5 10.5 0 1 0 30.5 22 Z" fill="#e0e3e7"/><circle cx="20" cy="22" r="14.6" fill="none" stroke="#939393" stroke-width="2.8"/><path d="M20 12 V22.5 H30" fill="none" stroke="#939393" stroke-width="2.8"/><path d="M14.5 2.5 H26" stroke="#939393" stroke-width="2.6" stroke-linecap="round"/></svg>
<div style="position:absolute;left:1889px;top:498px;width:8px;height:2.4px;background:#2f3237"></div>
<div class="t" style="left:2217px;top:485.1px;font-size:27px;font-weight:400;color:#2f3237;">In Progress</div>
<div style="position:absolute;left:0px;top:552px;width:2354px;height:98px;background:#fff"></div>
<div style="position:absolute;left:0px;top:650px;width:2354px;height:2px;background:#e4e6ea"></div>
<div style="position:absolute;left:20px;top:583px;width:32px;height:32px;border:2px solid #7b7f80;border-radius:6px;box-sizing:border-box;background:#fff"></div>
<svg style="position:absolute;left:81px;top:583px" width="34" height="34" viewBox="0 0 34 34"><path d="M3 19.2 L19.2 3.7 L28.4 12.5 L13.2 28.7 H3 Z" fill="#fff" stroke="#848a8e" stroke-width="2" stroke-linejoin="round"/><path d="M21 1.8 L30.2 10.6 M22.9 -0.1 L32.1 8.7" stroke="#a3a8ab" stroke-width="1.7"/></svg>
<svg style="position:absolute;left:146px;top:586px" width="36" height="30" viewBox="0 0 36 30"><rect x="1.5" y="1.5" width="31" height="23" rx="3" fill="#fff" stroke="#848a8e" stroke-width="2.2"/><path d="M3.5 3.5 L17 15.5 L30.5 3.5" fill="none" stroke="#848a8e" stroke-width="2"/></svg>
<svg style="position:absolute;left:214px;top:584px" width="32" height="32" viewBox="0 0 32 32"><rect x="1.5" y="1.5" width="26" height="27" rx="1" fill="#fff" stroke="#848a8e" stroke-width="2.2"/><path d="M7.5 8.5 H22.5 M7.5 14.5 H22.5 M7.5 20.5 H15" stroke="#848a8e" stroke-width="2.2" stroke-linecap="round"/></svg>
<div class="t" style="left:300px;top:586.6px;font-size:27px;font-weight:400;color:#2f3237;">71</div>
<svg style="position:absolute;left:408.4px;top:580.8px" width="33" height="36" viewBox="0 0 33 36"><path d="M16.50 2.00 L30.36 10.00 L30.36 26.00 L16.50 34.00 L2.64 26.00 L2.64 10.00 Z" fill="#f0961e" stroke="#f0961e" stroke-width="5" stroke-linejoin="round"/><path d="M16.5 6.2 L20.8 12 L25.4 13.2 L16.5 28.2 L12.2 22.6 L5.6 22.4 Z" fill="#fff" stroke="#fff" stroke-width="0.8" stroke-linejoin="round"/></svg>
<div class="t" style="left:456px;top:585.1px;font-size:27px;font-weight:400;color:#2f3237;">Laptop crashed</div>
<div class="t" style="left:1046px;top:585.1px;font-size:27px;font-weight:400;color:#2f3237;">Jean George</div>
<div style="position:absolute;left:1326px;top:591px;width:18px;height:18px;background:#d6d6d6;border-radius:50%"></div>
<div class="t" style="left:1353px;top:585.1px;font-size:27px;font-weight:400;color:#2f3237;">Bella Mark</div>
<svg style="position:absolute;left:1630px;top:580.5px" width="40" height="40" viewBox="0 0 40 40"><path d="M20 22 V11.5 A10.5 10.5 0 1 0 30.5 22 Z" fill="#e0e3e7"/><circle cx="20" cy="22" r="14.6" fill="none" stroke="#939393" stroke-width="2.8"/><path d="M20 12 V22.5 H30" fill="none" stroke="#939393" stroke-width="2.8"/><path d="M14.5 2.5 H26" stroke="#939393" stroke-width="2.6" stroke-linecap="round"/></svg>
<div style="position:absolute;left:1889px;top:598px;width:8px;height:2.4px;background:#2f3237"></div>
<div class="t" style="left:2217px;top:585.1px;font-size:27px;font-weight:400;color:#2f3237;">Closed</div>
<div style="position:absolute;left:0px;top:652px;width:2354px;height:98px;background:#fff"></div>
<div style="position:absolute;left:0px;top:750px;width:2354px;height:2px;background:#e4e6ea"></div>
<div style="position:absolute;left:20px;top:683px;width:32px;height:32px;border:2px solid #7b7f80;border-radius:6px;box-sizing:border-box;background:#fff"></div>
<svg style="position:absolute;left:81px;top:683px" width="34" height="34" viewBox="0 0 34 34"><path d="M3 19.2 L19.2 3.7 L28.4 12.5 L13.2 28.7 H3 Z" fill="#fff" stroke="#848a8e" stroke-width="2" stroke-linejoin="round"/><path d="M21 1.8 L30.2 10.6 M22.9 -0.1 L32.1 8.7" stroke="#a3a8ab" stroke-width="1.7"/></svg>
<svg style="position:absolute;left:146px;top:686px" width="36" height="30" viewBox="0 0 36 30"><rect x="1.5" y="1.5" width="31" height="23" rx="3" fill="#fff" stroke="#848a8e" stroke-width="2.2"/><path d="M3.5 3.5 L17 15.5 L30.5 3.5" fill="none" stroke="#848a8e" stroke-width="2"/></svg>
<svg style="position:absolute;left:214px;top:684px" width="32" height="32" viewBox="0 0 32 32"><rect x="1.5" y="1.5" width="26" height="27" rx="1" fill="#fff" stroke="#848a8e" stroke-width="2.2"/><path d="M7.5 8.5 H22.5 M7.5 14.5 H22.5 M7.5 20.5 H15" stroke="#848a8e" stroke-width="2.2" stroke-linecap="round"/></svg>
<div class="t" style="left:300px;top:686.6px;font-size:27px;font-weight:400;color:#2f3237;">92</div>
<svg style="position:absolute;left:408.4px;top:680.8px" width="33" height="36" viewBox="0 0 33 36"><path d="M16.50 2.00 L30.36 10.00 L30.36 26.00 L16.50 34.00 L2.64 26.00 L2.64 10.00 Z" fill="#f0961e" stroke="#f0961e" stroke-width="5" stroke-linejoin="round"/><path d="M16.5 6.2 L20.8 12 L25.4 13.2 L16.5 28.2 L12.2 22.6 L5.6 22.4 Z" fill="#fff" stroke="#fff" stroke-width="0.8" stroke-linejoin="round"/></svg>
<div class="t" style="left:456px;top:685.1px;font-size:27px;font-weight:400;color:#2f3237;">Laptop Crashes</div>
<div class="t" style="left:1046px;top:685.1px;font-size:27px;font-weight:400;color:#2f3237;">Benjamin Allen</div>
<div style="position:absolute;left:1326px;top:691px;width:18px;height:18px;background:#d6d6d6;border-radius:50%"></div>
<div class="t" style="left:1353px;top:685.1px;font-size:27px;font-weight:400;color:#2f3237;">Heather Grah...</div>
<svg style="position:absolute;left:1630px;top:680.5px" width="40" height="40" viewBox="0 0 40 40"><path d="M20 22 V11.5 A10.5 10.5 0 1 0 30.5 22 Z" fill="#e0e3e7"/><circle cx="20" cy="22" r="14.6" fill="none" stroke="#939393" stroke-width="2.8"/><path d="M20 12 V22.5 H30" fill="none" stroke="#939393" stroke-width="2.8"/><path d="M14.5 2.5 H26" stroke="#939393" stroke-width="2.6" stroke-linecap="round"/></svg>
<div style="position:absolute;left:1889px;top:698px;width:8px;height:2.4px;background:#2f3237"></div>
<svg style="position:absolute;left:2222.7px;top:683.8px" width="34" height="34" viewBox="0 0 34 34"><circle cx="17" cy="17" r="14.5" fill="none" stroke="#f2a03b" stroke-width="2.6"/><circle cx="17" cy="17" r="7" fill="#f0961e"/></svg>
<svg style="position:absolute;left:2265px;top:688px" width="30" height="30" viewBox="0 0 30 30"><rect x="0" y="0" width="2.6" height="27.5" fill="#7a7766"/><path d="M3.2 0 H25.5 L18.5 8.6 L25.5 17.3 H3.2 Z" fill="#e8000f"/></svg>
<div class="t" style="left:2305px;top:685.1px;font-size:27px;font-weight:400;color:#2f3237;">Open</div>
<div style="position:absolute;left:0px;top:752px;width:2354px;height:136px;background:#fff"></div>
<div style="position:absolute;left:0px;top:888px;width:2354px;height:2px;background:#e4e6ea"></div>
<div style="position:absolute;left:20px;top:783px;width:32px;height:32px;border:2px solid #7b7f80;border-radius:6px;box-sizing:border-box;background:#fff"></div>
<svg style="position:absolute;left:81px;top:783px" width="34" height="34" viewBox="0 0 34 34"><path d="M3 19.2 L19.2 3.7 L28.4 12.5 L13.2 28.7 H3 Z" fill="#fff" stroke="#848a8e" stroke-width="2" stroke-linejoin="round"/><path d="M21 1.8 L30.2 10.6 M22.9 -0.1 L32.1 8.7" stroke="#a3a8ab" stroke-width="1.7"/></svg>
<svg style="position:absolute;left:146px;top:786px" width="36" height="30" viewBox="0 0 36 30"><rect x="1.5" y="1.5" width="31" height="23" rx="3" fill="#fff" stroke="#848a8e" stroke-width="2.2"/><path d="M3.5 3.5 L17 15.5 L30.5 3.5" fill="none" stroke="#848a8e" stroke-width="2"/></svg>
<svg style="position:absolute;left:214px;top:784px" width="32" height="32" viewBox="0 0 32 32"><rect x="1.5" y="1.5" width="26" height="27" rx="1" fill="#fff" stroke="#848a8e" stroke-width="2.2"/><path d="M7.5 8.5 H22.5 M7.5 14.5 H22.5 M7.5 20.5 H15" stroke="#848a8e" stroke-width="2.2" stroke-linecap="round"/></svg>
<div class="t" style="left:300px;top:786.6px;font-size:27px;font-weight:400;color:#2f3237;">111</div>
<svg style="position:absolute;left:408.4px;top:780.8px" width="33" height="36" viewBox="0 0 33 36"><path d="M16.50 2.00 L30.36 10.00 L30.36 26.00 L16.50 34.00 L2.64 26.00 L2.64 10.00 Z" fill="#20bcc0" stroke="#20bcc0" stroke-width="5" stroke-linejoin="round"/><path d="M6.7 9.2 L11.3 11.5 L14 22.8 H24" fill="none" stroke="#fff" stroke-width="2"/><path d="M11.5 12 H25.7 L23.7 20.4 H13.6 Z" fill="#fff"/><rect x="14.5" y="14.5" width="3.5" height="3" fill="#d8dede"/><rect x="19.5" y="14.5" width="3.5" height="3" fill="#d8dede"/><circle cx="13.8" cy="27" r="1.8" fill="#fff"/><circle cx="20.8" cy="27" r="1.8" fill="#fff"/></svg>
<div class="t" style="left:456px;top:785.1px;font-size:27px;font-weight:400;color:#2f3237;">Please provide me an account in our CRM</div>
<div class="t" style="left:456px;top:829.1px;font-size:27px;font-weight:400;color:#2f3237;">system</div>
<div class="t" style="left:1046px;top:785.1px;font-size:27px;font-weight:400;color:#2f3237;">Bella Mark</div>
<div style="position:absolute;left:1326px;top:791px;width:18px;height:18px;background:#d6d6d6;border-radius:50%"></div>
<div class="t" style="left:1353px;top:785.1px;font-size:27px;font-weight:400;color:#2f3237;">John Roberts</div>
<svg style="position:absolute;left:1630px;top:780.5px" width="40" height="40" viewBox="0 0 40 40"><path d="M20 22 V11.5 A10.5 10.5 0 1 0 30.5 22 Z" fill="#e0e3e7"/><circle cx="20" cy="22" r="14.6" fill="none" stroke="#939393" stroke-width="2.8"/><path d="M20 12 V22.5 H30" fill="none" stroke="#939393" stroke-width="2.8"/><path d="M14.5 2.5 H26" stroke="#939393" stroke-width="2.6" stroke-linecap="round"/></svg>
<div style="position:absolute;left:1889px;top:798px;width:8px;height:2.4px;background:#2f3237"></div>
<svg style="position:absolute;left:2223px;top:783.8px" width="34" height="34" viewBox="0 0 34 34"><circle cx="17" cy="17" r="14.5" fill="none" stroke="#f2a03b" stroke-width="2.6"/><circle cx="17" cy="17" r="7" fill="#f0961e"/></svg>
<svg style="position:absolute;left:2263.5px;top:788px" width="30" height="30" viewBox="0 0 30 30"><rect x="0" y="0" width="2.6" height="27.5" fill="#7a7766"/><path d="M3.2 0 H25.5 L18.5 8.6 L25.5 17.3 H3.2 Z" fill="#f5b04a"/></svg>
<div class="t" style="left:2299px;top:785.1px;font-size:27px;font-weight:400;color:#2f3237;">Open</div>
<div style="position:absolute;left:0px;top:890px;width:2354px;height:98px;background:#fff"></div>
<div style="position:absolute;left:0px;top:988px;width:2354px;height:2px;background:#e4e6ea"></div>
<div style="position:absolute;left:20px;top:921px;width:32px;height:32px;border:2px solid #7b7f80;border-radius:6px;box-sizing:border-box;background:#fff"></div>
<svg style="position:absolute;left:81px;top:921px" width="34" height="34" viewBox="0 0 34 34"><path d="M3 19.2 L19.2 3.7 L28.4 12.5 L13.2 28.7 H3 Z" fill="#fff" stroke="#848a8e" stroke-width="2" stroke-linejoin="round"/><path d="M21 1.8 L30.2 10.6 M22.9 -0.1 L32.1 8.7" stroke="#a3a8ab" stroke-width="1.7"/></svg>
<svg style="position:absolute;left:146px;top:924px" width="36" height="30" viewBox="0 0 36 30"><rect x="1.5" y="1.5" width="31" height="23" rx="3" fill="#fff" stroke="#848a8e" stroke-width="2.2"/><path d="M3.5 3.5 L17 15.5 L30.5 3.5" fill="none" stroke="#848a8e" stroke-width="2"/></svg>
<svg style="position:absolute;left:214px;top:922px" width="32" height="32" viewBox="0 0 32 32"><rect x="1.5" y="1.5" width="26" height="27" rx="1" fill="#fff" stroke="#848a8e" stroke-width="2.2"/><path d="M7.5 8.5 H22.5 M7.5 14.5 H22.5 M7.5 20.5 H15" stroke="#848a8e" stroke-width="2.2" stroke-linecap="round"/></svg>
<div class="t" style="left:300px;top:924.6px;font-size:27px;font-weight:400;color:#2f3237;">69</div>
<svg style="position:absolute;left:376px;top:919.5px" width="26" height="35" viewBox="0 0 26 35"><g transform="translate(13,17.5) rotate(35) translate(-6,-14)"><path d="M8.5 7.5 V19.5 A3 3 0 0 1 2.5 19.5 V5.5 A4.5 4.5 0 0 1 11.5 5.5 V21.5 A5.5 5.5 0 0 1 0.5 21.5 V11" fill="none" stroke="#8a8d90" stroke-width="2"/></g></svg>
<svg style="position:absolute;left:408.4px;top:918.8px" width="33" height="36" viewBox="0 0 33 36"><path d="M16.50 2.00 L30.36 10.00 L30.36 26.00 L16.50 34.00 L2.64 26.00 L2.64 10.00 Z" fill="#f0961e" stroke="#f0961e" stroke-width="5" stroke-linejoin="round"/><path d="M16.5 6.2 L20.8 12 L25.4 13.2 L16.5 28.2 L12.2 22.6 L5.6 22.4 Z" fill="#fff" stroke="#fff" stroke-width="0.8" stroke-linejoin="round"/></svg>
<div class="t" style="left:456px;top:923.1px;font-size:27px;font-weight:400;color:#2f3237;">Printer Issues</div>
<div class="t" style="left:1046px;top:923.1px;font-size:27px;font-weight:400;color:#2f3237;">Bella Mark</div>
<div style="position:absolute;left:1326px;top:929px;width:18px;height:18px;background:#d6d6d6;border-radius:50%"></div>
<div class="t" style="left:1353px;top:923.1px;font-size:27px;font-weight:400;color:#2f3237;">Howard Stern</div>
<svg style="position:absolute;left:1632px;top:918.5px" width="40" height="40" viewBox="0 0 40 40"><path d="M20 22 V11.8 A10.2 10.2 0 1 1 12.04 15.62 Z" fill="#b3d4f7"/><circle cx="20" cy="22" r="15.3" fill="none" stroke="#3d85ee" stroke-width="2.9"/><path d="M20 22.5 V11" stroke="#3d85ee" stroke-width="2.6"/><path d="M20 22.5 L12.5 16" stroke="#3d85ee" stroke-width="3.2"/><path d="M14 1.8 H27" stroke="#3d85ee" stroke-width="2.8" stroke-linecap="round"/></svg>
<div style="position:absolute;left:1889px;top:936px;width:8px;height:2.4px;background:#2f3237"></div>
<svg style="position:absolute;left:2228.5px;top:927px" width="30" height="30" viewBox="0 0 30 30"><rect x="0" y="0" width="2.6" height="27.5" fill="#7a7766"/><path d="M3.2 0 H25.5 L18.5 8.6 L25.5 17.3 H3.2 Z" fill="#e8000f"/></svg>
<div class="t" style="left:2271px;top:923.1px;font-size:27px;font-weight:400;color:#2f3237;">Open</div>
<div style="position:absolute;left:0px;top:990px;width:2354px;height:98px;background:#fff"></div>
<div style="position:absolute;left:0px;top:1088px;width:2354px;height:2px;background:#e4e6ea"></div>
<div style="position:absolute;left:20px;top:1021px;width:32px;height:32px;border:2px solid #7b7f80;border-radius:6px;box-sizing:border-box;background:#fff"></div>
<svg style="position:absolute;left:81px;top:1021px" width="34" height="34" viewBox="0 0 34 34"><path d="M3 19.2 L19.2 3.7 L28.4 12.5 L13.2 28.7 H3 Z" fill="#fff" stroke="#848a8e" stroke-width="2" stroke-linejoin="round"/><path d="M21 1.8 L30.2 10.6 M22.9 -0.1 L32.1 8.7" stroke="#a3a8ab" stroke-width="1.7"/></svg>
<svg style="position:absolute;left:146px;top:1024px" width="36" height="30" viewBox="0 0 36 30"><rect x="1.5" y="1.5" width="31" height="23" rx="3" fill="#fff" stroke="#848a8e" stroke-width="2.2"/><path d="M3.5 3.5 L17 15.5 L30.5 3.5" fill="none" stroke="#848a8e" stroke-width="2"/></svg>
<svg style="position:absolute;left:214px;top:1022px" width="32" height="32" viewBox="0 0 32 32"><rect x="1.5" y="1.5" width="26" height="27" rx="1" fill="#fde9c8" stroke="#f5a94a" stroke-width="2.2"/><path d="M7.5 8.5 H22.5 M7.5 14.5 H22.5 M7.5 20.5 H15" stroke="#f5a94a" stroke-width="2.2" stroke-linecap="round"/></svg>
<div class="t" style="left:300px;top:1024.0px;font-size:26px;font-weight:700;color:#2f3237;">73</div>
<svg style="position:absolute;left:376px;top:1019.5px" width="26" height="35" viewBox="0 0 26 35"><g transform="translate(13,17.5) rotate(35) translate(-6,-14)"><path d="M8.5 7.5 V19.5 A3 3 0 0 1 2.5 19.5 V5.5 A4.5 4.5 0 0 1 11.5 5.5 V21.5 A5.5 5.5 0 0 1 0.5 21.5 V11" fill="none" stroke="#8a8d90" stroke-width="2"/></g></svg>
<svg style="position:absolute;left:408.4px;top:1018.8px" width="33" height="36" viewBox="0 0 33 36"><path d="M16.50 2.00 L30.36 10.00 L30.36 26.00 L16.50 34.00 L2.64 26.00 L2.64 10.00 Z" fill="#f0961e" stroke="#f0961e" stroke-width="5" stroke-linejoin="round"/><path d="M16.5 6.2 L20.8 12 L25.4 13.2 L16.5 28.2 L12.2 22.6 L5.6 22.4 Z" fill="#fff" stroke="#fff" stroke-width="0.8" stroke-linejoin="round"/></svg>
<div class="t" style="left:456px;top:1022.5px;font-size:26px;font-weight:700;color:#2f3237;">Problem with email attachments</div>
<div class="t" style="left:1046px;top:1022.5px;font-size:26px;font-weight:700;color:#2f3237;">Henry James</div>
<div class="t" style="left:1326px;top:1022.5px;font-size:26px;font-weight:700;color:#2f3237;">Unassigned</div>
<svg style="position:absolute;left:1630px;top:1018.5px" width="40" height="40" viewBox="0 0 40 40"><path d="M20 22 V11.5 A10.5 10.5 0 1 0 30.5 22 Z" fill="#e0e3e7"/><circle cx="20" cy="22" r="14.6" fill="none" stroke="#939393" stroke-width="2.8"/><path d="M20 12 V22.5 H30" fill="none" stroke="#939393" stroke-width="2.8"/><path d="M14.5 2.5 H26" stroke="#939393" stroke-width="2.6" stroke-linecap="round"/></svg>
<div class="t" style="left:1889px;top:1022.5px;font-size:26px;font-weight:700;color:#2f3237;">Hardware Problems</div>
<svg style="position:absolute;left:2228.5px;top:1027px" width="30" height="30" viewBox="0 0 30 30"><rect x="0" y="0" width="2.6" height="27.5" fill="#7a7766"/><path d="M3.2 0 H25.5 L18.5 8.6 L25.5 17.3 H3.2 Z" fill="#e8000f"/></svg>
<div class="t" style="left:2271px;top:1022.5px;font-size:26px;font-weight:700;color:#2f3237;">Closed</div>
</div>
</body></html>
